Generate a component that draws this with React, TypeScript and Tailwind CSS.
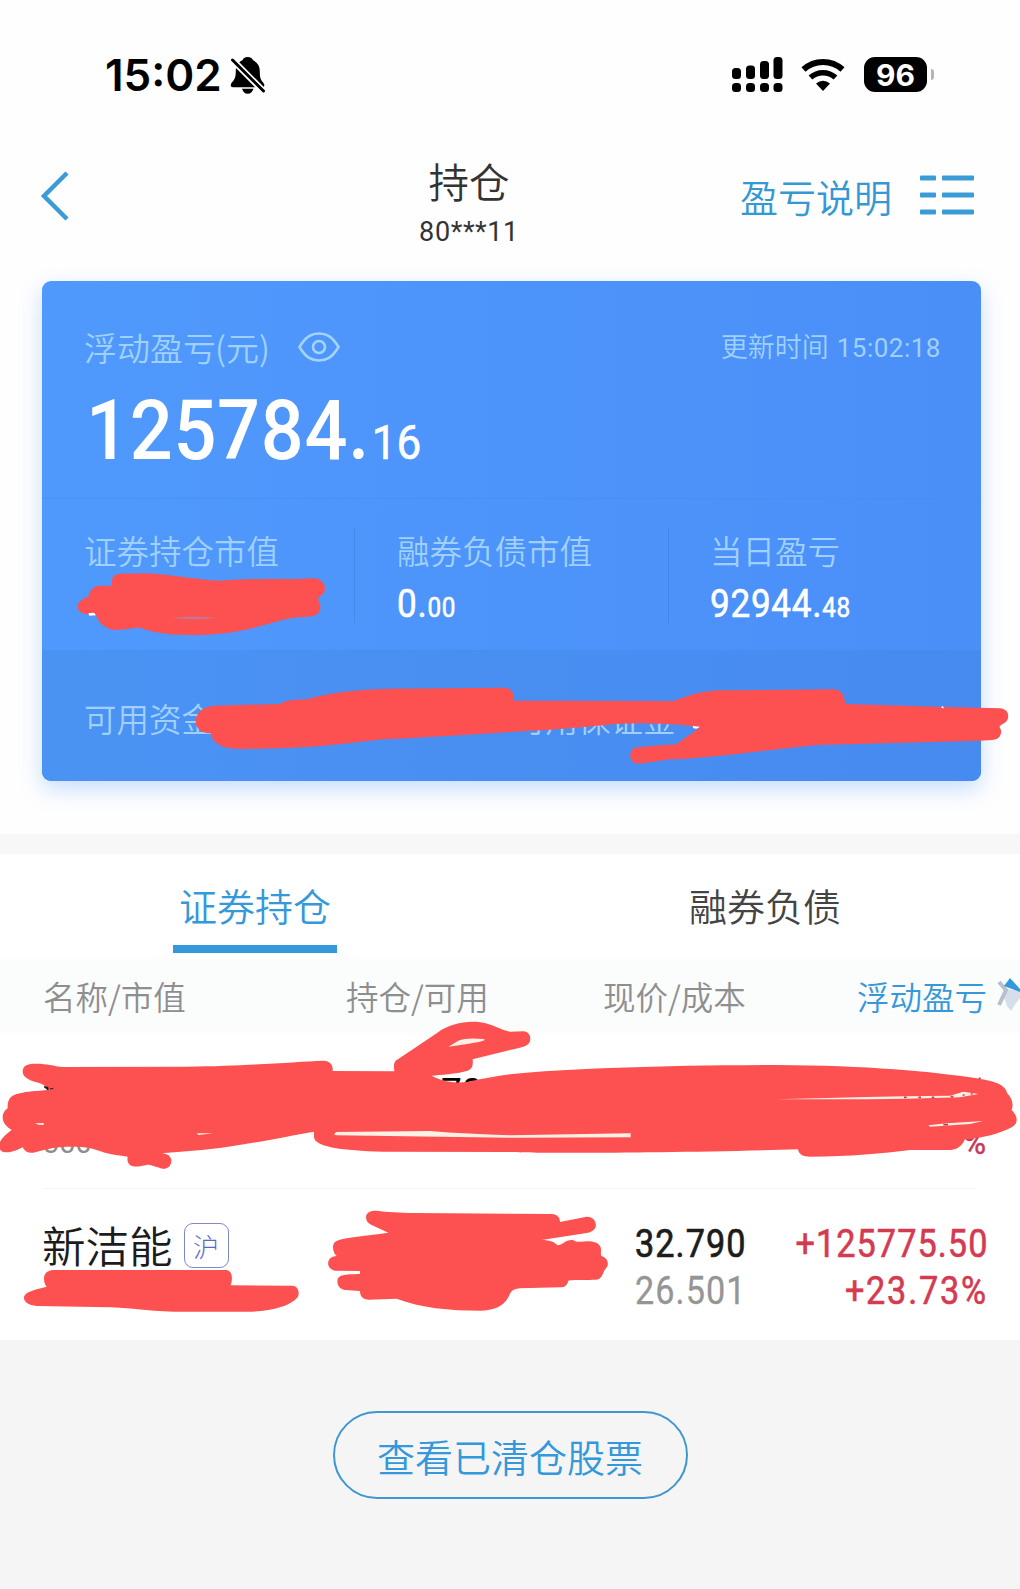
import type { ReactNode } from "react";

const tabs = [
  { label: "证券持仓", active: true },
  { label: "融券负债", active: false },
];

const RED = "#fd5151";

// Narrow numeric text, anchored on the left or the right edge
function Num({
  children,
  right = false,
  className = "",
}: {
  children: ReactNode;
  right?: boolean;
  className?: string;
}) {
  return (
    <span
      className={`inline-block scale-x-[0.9] whitespace-nowrap font-['Roboto',sans-serif] ${
        right ? "origin-right" : "origin-left"
      } ${className}`}
    >
      {children}
    </span>
  );
}

function StatusBar() {
  return (
    <div className="flex h-[150px] items-start pt-[57px] pr-[86px] pl-[105px]">
      <span className="-mt-[1px] w-[125px] font-['Inter',sans-serif] text-[44px] leading-[38px] font-semibold text-black">
        15:02
      </span>
      <svg width="36" height="38" viewBox="0 0 36 38">
        <path
          d="M17.700 0C14.700 0 13 1.500 12.500 3.300C8 5.300 5.800 9.300 5.800 14C5.800 21 4.500 22.500 1.500 26C0 28.500 0.800 30.300 3 30.300H32C34.500 30.300 35 28 33.500 26C30.500 22.500 29.800 21 29.800 14C29.800 9.300 27.500 5.300 23 3.300C22.500 1.500 20.700 0 17.700 0ZM12 31.800H23.500C22.500 34.800 20.500 36.800 17.700 36.800S13 34.800 12 31.800Z"
          fill="#000"
        />
        <path d="M0 0.400l37 37.400" stroke="#fff" strokeWidth="6.400" />
        <path d="M2.500 3l31 31" stroke="#000" strokeWidth="3" strokeLinecap="round" />
      </svg>
      <svg width="52" height="36" viewBox="0 0 52 36" className="ml-auto">
        <rect x="1" y="11" width="9" height="11" rx="3.500" />
        <rect x="15" y="8.500" width="9" height="13.500" rx="3.500" />
        <rect x="29" y="4" width="9" height="18" rx="3.500" />
        <rect x="42.500" y="0" width="9" height="22" rx="3.500" />
        <rect x="1" y="26" width="9" height="9" rx="3.500" />
        <rect x="15" y="26" width="9" height="9" rx="3.500" />
        <rect x="29" y="26" width="9" height="9" rx="3.500" />
        <rect x="42.500" y="26" width="9" height="9" rx="3.500" />
      </svg>
      <svg width="44" height="34" viewBox="0 0 44 34" className="mt-[1px] ml-[18px]">
        <path d="M2.500 11.500a29 29 0 0 1 39 0" fill="none" stroke="#000" strokeWidth="6" />
        <path d="M9.500 19.500a18.500 18.500 0 0 1 25 0" fill="none" stroke="#000" strokeWidth="5.500" />
        <path d="M22 33l-7-7.500q7-5.500 14 0z" />
      </svg>
      <div className="ml-[19px] flex items-center">
        <div className="flex h-[35px] w-[63px] items-center justify-center rounded-[11px] bg-black font-['Inter',sans-serif] text-[30px] leading-none font-bold text-white">
          96
        </div>
        <div className="ml-[4px] h-[11px] w-[3px] rounded-r-full bg-[#b5b5b5]" />
      </div>
    </div>
  );
}

function NavBar() {
  return (
    <div className="flex h-[131px] items-start text-[#3498d4]">
      <svg width="30" height="50" viewBox="0 0 30 50" className="mt-[21px] ml-[40px]">
        <path d="M27 2L4 25l23 23" fill="none" stroke="#3a9bd6" strokeWidth="4.500" />
      </svg>
      <div className="ml-[299px] flex w-[200px] flex-col items-center text-[#333]">
        <h1 className="mt-[8px] text-[40.500px] leading-[46px] font-[350]">持仓</h1>
        <span className="mt-[9px] font-['Roboto',sans-serif] text-[27px] leading-[38px] tracking-[0.6px]">
          80***11
        </span>
      </div>
      <span className="mt-[21px] ml-[171px] text-[38px] leading-[50px] font-[350]">盈亏说明</span>
      <svg width="54" height="41" viewBox="0 0 54 41" fill="#3a9bd6" className="mt-[25px] ml-[28px]">
        {[0.5, 17.500, 34.500].map((y) => (
          <g key={y}>
            <rect x="0" y={y} width="16" height="5" rx="1" />
            <rect x="22" y={y} width="32" height="5" rx="1" />
          </g>
        ))}
      </svg>
    </div>
  );
}

function SummaryCard() {
  return (
    <section className="mx-[42px] flex h-[500px] w-[939px] flex-col overflow-hidden rounded-[9px] bg-linear-to-r from-[#5099fc] to-[#4a8ff8] font-[350] text-[#a0d0fd] shadow-[0_8px_22px_rgba(74,143,248,0.3)]">
      <div className="h-[218px] border-b border-[#468cf0]/60 px-[42px] pt-[43px]">
        <div className="flex h-[46px] items-center">
          <span className="text-[33px] leading-[46px]">浮动盈亏</span>
          <span className="-ml-[1px] text-[33px] leading-[46px]">(元)</span>
          <svg width="42" height="30" viewBox="0 0 42 30" className="ml-[28px]" fill="none" stroke="#a5d3fd" strokeWidth="2.600">
            <path d="M1.500 15C8 4 14 1.500 21 1.500S34 4 40.500 15C34 26 28 28.500 21 28.500S8 26 1.500 15z" />
            <circle cx="21" cy="15" r="6" />
          </svg>
          <span className="-mr-[2px] ml-auto flex items-baseline text-[27px] leading-[46px]">
            更新时间
            <span className="ml-[8px] font-['Roboto',sans-serif] text-[26px] font-normal tracking-[0.5px]">
              15:02:18
            </span>
          </span>
        </div>
        <div className="mt-[16px] ml-[2px] leading-[90px] text-white">
          <Num className="text-[84px] font-medium tracking-[0.8px]">
            125784.
            <span className="ml-[2px] text-[49px] font-normal tracking-normal [-webkit-text-stroke:0.6px]">16</span>
          </Num>
        </div>
      </div>
      <div className="flex h-[151px]">
        <div className="flex w-[313px] pt-[28px]">
          <div className="h-[96px] w-full border-r border-[#4389ec] pl-[42px]">
            <p className="text-[32.500px] leading-[46px]">证券持仓市值</p>
          </div>
        </div>
        <div className="flex w-[314px] pt-[28px]">
          <div className="h-[96px] w-full border-r border-[#4085ea] pl-[42px]">
            <p className="text-[32.500px] leading-[46px]">融券负债市值</p>
            <p className="mt-[6px] leading-[50px] text-white">
              <Num className="text-[39px] font-normal tracking-[0.8px] [-webkit-text-stroke:0.6px]">
                0.<span className="text-[27px]">00</span>
              </Num>
            </p>
          </div>
        </div>
        <div className="pt-[28px] pl-[41px]">
          <p className="text-[32.500px] leading-[46px]">当日盈亏</p>
          <p className="mt-[6px] leading-[50px] text-white">
            <Num className="text-[39px] font-normal tracking-[0.8px] [-webkit-text-stroke:0.6px]">
              92944.<span className="text-[27px]">48</span>
            </Num>
          </p>
        </div>
      </div>
      <div className="flex flex-1 items-center bg-linear-to-r from-[#4a93f3] to-[#478af0] pt-[5px] pl-[42px] text-[32.500px]">
        <span className="w-[429px]">可用资金</span>
        <span>可用保证金</span>
      </div>
    </section>
  );
}

function Tabs() {
  return (
    <div className="flex h-[105px]">
      {tabs.map((tab) => (
        <div key={tab.label} className="flex w-1/2 flex-col items-center">
          <span
            className={`mt-[26px] text-[38px] leading-[50px] font-[350] ${
              tab.active ? "text-[#3498db]" : "text-[#444]"
            }`}
          >
            {tab.label}
          </span>
          {tab.active && <div className="mt-[15px] h-[8px] w-[164px] bg-[#3498db]" />}
        </div>
      ))}
    </div>
  );
}

function TableHead() {
  return (
    <div className="flex h-[74px] items-center bg-[#fbfcfc] pl-[43px] text-[32.500px] font-[350] text-[#8e8e8e]">
      <span className="w-[303px]">名称/市值</span>
      <span className="w-[257px]">持仓/可用</span>
      <span className="w-[254px]">现价/成本</span>
      <span className="text-[#3498db]">浮动盈亏</span>
      <svg width="23" height="36" viewBox="0 0 23 36" className="ml-auto">
        <path d="M9 11L23 13V20L19 25L14 33L10 28L7 19Z" fill="#d6deec" />
        <path d="M2 4L9 12L2 27" fill="none" stroke="#b9bfcc" strokeWidth="4" />
        <path d="M13 0L23 11V14L7 8Z" fill="#3498db" />
      </svg>
    </div>
  );
}

function Rows() {
  return (
    <div className="font-['Roboto',sans-serif]">
      <div className="mx-[43px] flex h-[156px] items-end border-b border-[#f4f4f4] pb-[22px] text-[37px] leading-[46px] text-[#8c8c8c]">
        <span className="w-[398px] text-[29px]">300</span>
        <span className="mb-[51px] text-[37px] text-black">700</span>
        <span className="-mr-[9px] mb-[1px] ml-auto text-[34px] text-[#c43a58]">
          <Num right className="[-webkit-text-stroke:0.6px]">
            %
          </Num>
        </span>
      </div>
      <div className="flex h-[151px] pr-[32px] pl-[42px]">
        <div className="flex w-[593px] items-start pt-[31px] font-['Noto_Sans_CJK_SC',sans-serif]">
          <span className="text-[43.500px] leading-[50px] font-[350] text-[#1c1c1c]">新洁能</span>
          <span className="mt-[3px] ml-[11px] flex h-[45px] w-[45px] items-center justify-center rounded-[9px] border-[1.500px] border-[#8088c8] text-[26px] leading-none font-light text-[#5a68c8]">
            沪
          </span>
        </div>
        <div className="w-[130px] pt-[32px] text-[38px] leading-[47px]">
          <Num className="tracking-[1.200px] text-[#1c1c1c] [-webkit-text-stroke:0.7px]">32.790</Num>
          <Num className="tracking-[1.200px] text-[#959595] [-webkit-text-stroke:0.3px]">26.501</Num>
        </div>
        <div className="ml-auto flex flex-col items-end pt-[32px] text-[38px] leading-[47px] tracking-[1.200px] text-[#d43a50]">
          <Num right className="[-webkit-text-stroke:0.6px]">
            +125775.50
          </Num>
          <Num right className="tracking-[2px] [-webkit-text-stroke:0.6px]">
            +23.73%
          </Num>
        </div>
      </div>
    </div>
  );
}

// Brush strokes hiding the private amounts
function CardBrush() {
  return (
    <svg width="990" height="300" viewBox="0 0 2970 900" className="pointer-events-none absolute top-[500px] left-[30px]">
      <g fill={RED}>
        <path d="M143 320C143 305 155 298 175 290C180 270 190 257 210 257L245 258C243 235 250 222 270 221L350 220C430 224 500 240 570 242C650 236 720 237 800 237L850 235C870 235 885 250 885 265C885 280 870 290 862 296C870 305 873 318 870 330C865 345 850 350 835 350C800 352 790 352 765 358C700 375 620 405 500 405C430 405 380 402 330 383C310 383 290 388 260 390C230 390 205 370 198 345L165 342C150 338 143 330 143 320Z" />
        <path d="M497 665C497 640 515 622 550 617L750 612C765 603 775 600 830 598C900 578 980 568 1080 566L1420 563C1440 563 1450 575 1450 590L1450 602L1500 602L1930 603C1960 595 2000 570 2090 571L2410 568C2430 568 2445 585 2445 612L2720 620L2910 625C2930 627 2937 640 2934 655C2930 670 2915 672 2908 680C2920 695 2912 720 2885 720L2850 722L2360 735C2200 750 2050 775 1920 778C1870 785 1840 792 1820 790C1800 788 1797 765 1805 750C1815 738 1840 742 1870 737L1940 733C1960 715 1990 700 2010 682L1960 675Q1850 667 1760 672C1650 682 1550 691 1500 692L1450 695C1300 705 1180 712 1060 718C950 730 850 743 750 745L630 747C570 747 545 725 543 700C515 700 497 685 497 665Z" />
      </g>
      <path d="M425 354Q490 346 560 354Q490 361 425 354Z" fill="#c07898" />
      <path d="M175 340L192 338L198 346L178 347ZM1988 678L2010 680L2000 686L1990 685ZM2734 621L2738 618L2742 625L2735 624Z" fill="#fff" />
    </svg>
  );
}

function RowBrush() {
  return (
    <svg width="1020" height="330" viewBox="0 0 3060 990" className="pointer-events-none absolute top-[1010px] left-0">
      <g fill={RED}>
        <path d="M68 185C68 165 85 160 110 161C140 161 160 168 190 171L560 170C760 168 880 155 970 152C990 152 1000 165 998 183L1183 184C1180 160 1183 153 1195 147L1310 70C1350 40 1400 32 1440 37C1480 42 1500 60 1530 65L1570 64C1590 66 1595 85 1588 98C1580 110 1560 112 1530 120L1418 148C1420 170 1415 178 1400 183C1370 192 1320 195 1295 197C1330 215 1360 220 1400 216C1440 208 1490 198 1530 193C1700 175 2000 166 2330 165C2600 166 2800 185 2930 205C2990 215 3015 225 3022 250C3035 265 3042 280 3035 300C3055 320 3055 340 3035 352C3000 370 2950 385 2895 388C2885 410 2870 420 2850 420L2730 420C2650 430 2550 440 2430 440C2410 440 2397 435 2394 418C2000 430 1600 430 1530 426L1150 425C1020 422 960 410 945 390C940 380 942 372 942 365C850 380 700 415 560 424L485 430C505 432 515 440 514 455C512 470 500 478 487 476C465 470 445 462 440 465C420 470 400 472 390 465C383 460 381 450 383 440C350 435 320 432 290 420C270 412 250 410 200 410C160 411 130 420 100 428C85 430 75 425 68 412C50 420 40 427 20 427C5 427 -5 420 -3 400C5 385 20 370 35 360C20 350 8 340 8 322C8 310 15 300 23 295C22 270 30 255 60 250C80 244 110 243 145 240C140 230 130 222 110 217C85 210 68 200 68 185Z" />
        <path d="M132 805C132 788 145 780 165 780L680 780C695 783 700 800 692 826L880 827C895 830 900 850 893 862C870 890 810 905 740 905L520 905C440 903 380 893 330 892L110 888C85 886 70 875 72 860C78 845 100 840 140 830C133 822 132 815 132 805Z" />
        <path d="M1098 622C1098 608 1110 601 1130 602C1160 606 1200 608 1240 609L1655 612C1672 614 1680 622 1680 636L1760 620C1780 619 1790 635 1787 650C1784 662 1770 667 1760 669L1625 690C1650 690 1665 697 1672 706C1690 705 1695 690 1715 690C1725 690 1725 697 1740 695C1765 692 1795 692 1802 712C1805 725 1800 735 1805 738C1825 745 1828 765 1818 775C1808 785 1810 800 1795 808C1780 812 1720 808 1705 812C1702 825 1695 832 1680 832L1560 835C1530 838 1532 850 1525 862C1510 890 1480 902 1440 902C1350 902 1260 893 1190 866L1105 869C1085 868 1080 855 1080 843L1035 840C1015 837 1010 820 1013 808C1018 795 1030 793 1080 792L1080 783L1005 782C985 778 980 760 988 748C993 740 1003 738 1010 738C1000 730 995 710 1003 698C1015 685 1050 683 1165 668L1115 645C1103 640 1098 632 1098 622Z" />
      </g>
      <g fill="#fff0e6">
        <path d="M1345 110L1375 92Q1400 82 1450 87Q1462 90 1440 95Q1400 103 1345 110Z" />
        <path d="M1002 374L1008 366L1290 363Q1400 372 1530 376L1892 370V382L1530 383L1010 376Z" />
        <path d="M2330 268L2600 261L2720 259L2850 257L2890 245L2935 252L2880 262L2720 266L2600 268Z" />
        <path d="M2785 346L2840 340L2950 333L2910 342L2790 350Z" />
        <path d="M105 340L130 339L132 345L115 344ZM590 370L640 370L595 375Z" />
      </g>
      <path d="M2712 262h8M2755 262h8M2795 262h8M2852 260h8M2888 255h6M2912 252h6M2830 344h14M2936 205h6" stroke="#d0384a" strokeWidth="5" fill="none" />
      <path d="M132 230l12 2v8zM150 236h10" stroke="#222" strokeWidth="3" />
    </svg>
  );
}

export default function App() {
  return (
    <div className="relative h-[1589px] w-[1020px] overflow-hidden bg-[#f5f5f5] font-['Noto_Sans_CJK_SC',sans-serif]">
      <div className="h-[834px] bg-[#fefefe]">
        <StatusBar />
        <NavBar />
        <SummaryCard />
      </div>
      <div className="h-[20px] bg-[#f7f7f7]" />
      <div className="h-[486px] bg-white">
        <Tabs />
        <TableHead />
        <Rows />
      </div>
      <div className="flex justify-center pt-[71px]">
        <button className="h-[88px] w-[355px] rounded-full border-2 border-[#3f97cf] text-[38px] font-[350] text-[#3498db]">
          查看已清仓股票
        </button>
      </div>
      <CardBrush />
      <RowBrush />
    </div>
  );
}
